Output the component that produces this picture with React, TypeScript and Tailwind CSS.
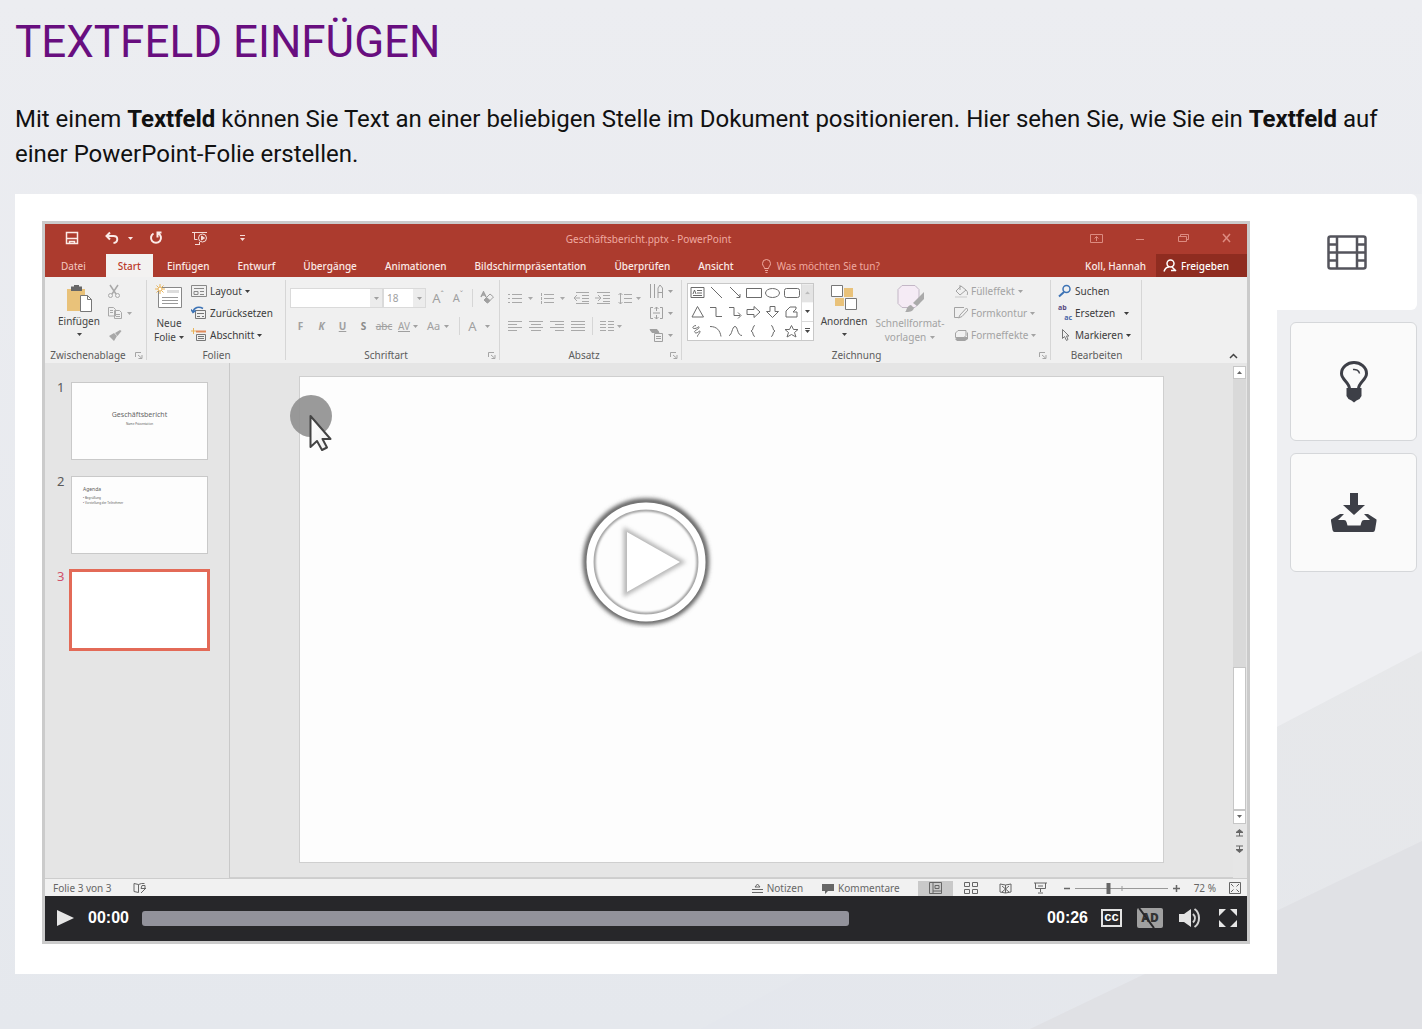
import type { ReactNode } from "react";

type Kids = { children?: ReactNode };

function Icon({ w = 16, h = 16, className = "", children }: Kids & { w?: number; h?: number; className?: string }) {
  return (
    <svg
      width={w}
      height={h}
      viewBox={`0 0 ${w} ${h}`}
      fill="none"
      stroke="currentColor"
      aria-hidden="true"
      className={`shrink-0 ${className}`}
    >
      {children}
    </svg>
  );
}

function Caret() {
  return (
    <Icon w={5} h={3}>
      <path d="M0 0h5L2.5 3z" fill="currentColor" stroke="none" />
    </Icon>
  );
}

function Launcher() {
  return (
    <Icon w={8} h={7} className="absolute right-1 bottom-1 text-[#a5a5a5]">
      <path d="M.5 5V.5H6M3 3l3.500 3M7 3v3.500H3.500" />
    </Icon>
  );
}

function Group({
  label,
  className,
  launcher,
  children,
}: Kids & { label: string; className: string; launcher?: boolean }) {
  return (
    <section className={`relative flex shrink-0 flex-col ${className}`}>
      <div className="flex h-[69px]">{children}</div>
      <h3 className="text-center leading-4 whitespace-nowrap text-[#5c5c5c]">{label}</h3>
      {launcher && <Launcher />}
      <span className="absolute top-0 right-0 h-[80px] w-px bg-[#d6d6d6]" />
    </section>
  );
}

function Tool({ label, className = "", children }: Kids & { label: string; className?: string }) {
  return (
    <button type="button" aria-label={label} className={`flex items-center justify-center ${className}`}>
      {children}
    </button>
  );
}

function Row({
  label,
  icon,
  caret,
  className = "text-[#3c3c3c]",
}: {
  label: string;
  icon: ReactNode;
  caret?: boolean;
  className?: string;
}) {
  return (
    <button type="button" className={`flex h-[22px] items-center gap-[3px] whitespace-nowrap ${className}`}>
      {icon}
      {label}
      {caret && <Caret />}
    </button>
  );
}

function Backdrop() {
  return (
    <svg className="absolute inset-0 h-full w-full" viewBox="0 0 1422 1029" preserveAspectRatio="none" aria-hidden="true">
      <defs>
        <linearGradient id="base" x1="0" y1="0" x2="0" y2="1">
          <stop offset="0" stopColor="#ecedf1" />
          <stop offset="1" stopColor="#e5e8ed" />
        </linearGradient>
        <linearGradient id="band" x1="0" y1="1" x2="1" y2="0">
          <stop offset="0" stopColor="#e4e7ed" />
          <stop offset="1" stopColor="#e7e8ea" />
        </linearGradient>
      </defs>
      <path d="M0 0h1422v1029H0z" fill="url(#base)" />
      <path d="M1277 194h145v470l-145 75z" fill="#eeeff2" />
      <path d="M1422 651 700 1029h722z" fill="url(#band)" />
      <path d="M1422 841 1030 1029h392z" fill="#e0e1e5" />
    </svg>
  );
}

function TitleBar() {
  return (
    <div className="flex h-[30px] items-center pb-[2px] text-[#f6dcd8]">
      <div className="flex flex-1 items-center pl-[20px]">
        <Tool label="Speichern">
          <Icon w={14} h={14} className="text-[#fbeae7]">
            <path d="M1.500 1.500h11v11h-11zM1.500 7.500h11M4.500 12.500v-2h5v2" strokeWidth="1.500" />
          </Icon>
        </Tool>
        <Tool label="Rückgängig" className="ml-[26px] gap-2 text-[#fbeae7]">
          <Icon w={15} h={14}>
            <path d="M5 1.500 1.500 5 5 8.500M2 5h6.500c5 0 5 6.500 0 7" strokeWidth="2" />
          </Icon>
          <Caret />
        </Tool>
        <Tool label="Wiederholen" className="ml-[16px] text-[#fbeae7]">
          <Icon w={14} h={14}>
            <path d="M4.500 2.500a5 5 0 1 0 5 0M8.500 6.500v-5h4" strokeWidth="2" />
          </Icon>
        </Tool>
        <Tool label="Präsentation starten" className="ml-[28px]">
          <Icon w={18} h={15}>
            <path d="M1 1.500h15M3.500 2v6.500h3M4 13.500h5M8.500 11v3" />
            <circle cx="11.500" cy="7" r="4" />
            <path d="M10.500 5v4l3-2z" fill="currentColor" />
          </Icon>
        </Tool>
        <Tool label="Symbolleiste anpassen" className="ml-[30px]">
          <Icon w={7} h={7}>
            <path d="M1 .500h5" />
            <path d="M1 3h5L3.500 6z" fill="currentColor" stroke="none" />
          </Icon>
        </Tool>
      </div>
      <span className="pt-[2px] text-[#f0aaa0]">Geschäftsbericht.pptx - PowerPoint</span>
      <div className="flex flex-1 items-center justify-end gap-[32px] pr-[15px] text-[#dd8b80]">
        <Tool label="Menüband-Optionen">
          <Icon w={13} h={10}>
            <path d="M.500 1.500h12v8H.500zM6.500 8V3.500M4.500 5.500l2-2 2 2" />
          </Icon>
        </Tool>
        <Tool label="Minimieren">
          <Icon w={11} h={10}>
            <path d="M1 6.500h8" />
          </Icon>
        </Tool>
        <Tool label="Verkleinern">
          <Icon w={11} h={10}>
            <path d="M.500 3.500h8v5h-8zM2.500 3V1.500h8v5h-2" />
          </Icon>
        </Tool>
        <Tool label="Schließen">
          <Icon w={11} h={10}>
            <path d="m2 1 7 8M9 1 2 9" strokeWidth="1.500" />
          </Icon>
        </Tool>
      </div>
    </div>
  );
}

const tabs = ["Datei", "Start", "Einfügen", "Entwurf", "Übergänge", "Animationen", "Bildschirmpräsentation", "Überprüfen", "Ansicht"];

function TabBar() {
  return (
    <div className="flex h-[23px] items-stretch whitespace-nowrap text-[#fbeae7]">
      {tabs.map((tab) => (
        <button
          key={tab}
          type="button"
          className={
            tab === "Start"
              ? "bg-[#f3f2f1] px-[12px] font-medium text-[#bb3a2b]"
              : tab === "Datei"
                ? "pr-[20px] pl-[16px] text-[#f3c9c3]"
                : "px-[14px] font-medium"
          }
        >
          {tab}
        </button>
      ))}
      <button type="button" className="ml-[13px] flex items-center gap-[5px] text-[#f0aaa0]">
        <Icon w={11} h={14}>
          <path d="M3.500 9.500C3.500 7.500 1.500 7 1.500 4.500a4 4 0 0 1 8 0c0 2.500-2 3-2 5zM4 11.500h3M4.500 13.500h2" />
        </Icon>
        Was möchten Sie tun?
      </button>
      <button type="button" className="ml-auto px-[10px] font-medium">
        Koll, Hannah
      </button>
      <button type="button" className="flex w-[91px] items-center gap-[4px] bg-[#8f2c20] pl-[7px] font-medium text-white">
        <Icon w={14} h={14}>
          <circle cx="7.500" cy="4.500" r="3.500" strokeWidth="1.500" />
          <path d="M1 12.500c1-3 3-4.500 5-4.500M9 8l4 4M8 11.500h5" strokeWidth="1.500" />
        </Icon>
        Freigeben
      </button>
    </div>
  );
}

function LinesIcon({ lines }: { lines: string }) {
  return (
    <Icon w={14} h={11} className="text-[#a9a9a9]">
      <path d={lines} />
    </Icon>
  );
}

const shapes = [
  "M2 1.500h13v10H2zM8 4.500h5M8 7h5M4 9.500h9M4 8l1.500-4L7 8",
  "m3 1 11 11",
  "m3 1 10 10M13 8v3.500H9.500",
  "M1.500 2.500h15v9h-15z",
  "M1.500 7a7 4.500 0 1 0 14 0 7 4.500 0 1 0-14 0z",
  "M3.500 2.500h11q2 0 2 2v5q0 2-2 2h-11q-2 0-2-2v-5q0-2 2-2z",
  "m8.500 1.500 6 10.500H3z",
  "M2 2.500h6v9h6",
  "M2 2.500h5v8h6M11 7.500l3 3-3 3",
  "M2 4.500h7V1.500L15 7l-6 5.500v-3H2z",
  "M6 1.500h5v5h3.500L8.500 12.500 2.500 6.500H6z",
  "M3 12V6l4-4h6v2l-3 3h4v5z",
  "M7 1.500C3 2 3 5 6 4.500s4-3 4-1-6 3-4 5 5-3 5-1-4 5-2 5",
  "M2 2.500c7 0 10 4 11 10",
  "M2 11.500c3 0 3-9 6-9s2 9 7 9",
  "M10 1.500c-3 0-1 5-4 5.500 3 .5 1 5.500 4 5.500",
  "M7 1.500c3 0 1 5 4 5.500-3 .5-1 5.500-4 5.500",
  "m8.500 1.500 2 4h4.500L11.500 8.500l1.500 4.500-4.500-2.500L4 13l1.500-4.500L2 5.500h4.500z",
];

function Ribbon() {
  return (
    <div className="relative flex h-[86px] overflow-hidden bg-[#f0f0f0] pt-[3px] text-[#444]">
      <Group label="Zwischenablage" className="w-[102px] [&_h3]:pr-[16px]" launcher>
        <button type="button" className="flex w-[62px] flex-col items-center pt-1 pl-[6px]">
          <Icon w={28} h={29}>
            <path d="M2 5h18v22H2z" fill="#e9c27a" stroke="none" />
            <path d="M6 2.500h3V1h5v1.500h3V7H6z" fill="#666" stroke="none" />
            <path d="M15.500 11.500h7l4 4v12h-11z" fill="#fff" stroke="#777" />
            <path d="M22.500 11.500v4h4" stroke="#777" />
          </Icon>
          <span className="mb-[4px] leading-4">Einfügen</span>
          <Caret />
        </button>
        <div className="flex flex-col text-[#a8a8a8]">
          <Tool label="Ausschneiden" className="h-[22px] w-[14px]">
            <Icon w={14} h={15}>
              <path d="m3 1 6 9M11 1 5 10" strokeWidth="1.500" />
              <circle cx="3.500" cy="11.500" r="2" />
              <circle cx="10.500" cy="11.500" r="2" />
            </Icon>
          </Tool>
          <Tool label="Kopieren" className="h-[22px] justify-start! gap-1">
            <Icon w={16} h={14}>
              <path d="M1.500 1.500h5l2 2V10h-7zM7.500 4.500h5l2 2v6h-7zM3 4.500h3M3 6.500h3M9 8.500h4M9 10.500h4" />
            </Icon>
            <Caret />
          </Tool>
          <Tool label="Format übertragen" className="h-[22px] w-[16px]">
            <Icon w={14} h={13}>
              <path d="m1 7 5 5 3-5-3-3zM7 4l2.500 3 4-5L12 1z" fill="currentColor" stroke="none" />
            </Icon>
          </Tool>
        </div>
      </Group>

      <Group label="Folien" className="w-[139px]">
        <button type="button" className="flex w-[44px] flex-col items-center pt-[4px]">
          <Icon w={28} h={25} className="mb-[7px]">
            <path d="M3.500 3.500h23v20h-23z" fill="#fff" stroke="#888" />
            <path d="M12 6h12v3H12z" fill="#ddd" stroke="none" />
            <path d="M7 13.500h16M7 16.500h16M7 19.500h16" stroke="#999" />
            <path d="M5 0v10M0 5h10M1.500 1.500l7 7M8.500 1.500l-7 7" stroke="#e9b45a" />
            <circle cx="5" cy="5" r="2" fill="#fff" stroke="#e9b45a" />
          </Icon>
          <span className="leading-[14px]">Neue</span>
          <span className="flex items-center gap-[3px] leading-[14px]">
            Folie <Caret />
          </span>
        </button>
        <div>
          <Row
            label="Layout"
            caret
            icon={
              <Icon w={16} h={14}>
                <path d="M.500 1.500h15v11H.500zM3 4.500h10M3 7.500h4v3H3zM9 7.500h4M9 10.500h4" stroke="#888" />
              </Icon>
            }
          />
          <Row
            label="Zurücksetzen"
            icon={
              <Icon w={16} h={14}>
                <path d="M4.500 4.500h10v8h-10zM6 7.500h7M6 10.500h3M11 10.500h2" stroke="#777" />
                <path d="M12 2.500C8 0 3 1 2 6M0 3.500 2 6.500l3-2" stroke="#3d73b5" strokeWidth="1.500" />
              </Icon>
            }
          />
          <Row
            label="Abschnitt"
            caret
            icon={
              <Icon w={16} h={14}>
                <path d="M5.500 6.500h9v6h-9zM7 8.500h6M7 10.500h6" stroke="#777" />
                <path d="M5 3.500h10" stroke="#e08a5a" strokeWidth="2" />
                <path d="M2.500 0v6M0 3h5" stroke="#e9b45a" />
              </Icon>
            }
          />
        </div>
      </Group>

      <Group label="Schriftart" className="w-[214px] [&_h3]:pr-[14px]" launcher>
        <div className="flex w-full flex-col pl-[4px] text-[#a0a0a0]">
          <div className="mt-[8px] flex h-[20px] items-center">
            <label className="flex h-full w-[93px] items-center border border-[#dadada] bg-white">
              <input aria-label="Schriftart" className="h-full min-w-0 flex-1 outline-none" />
              <span className="flex h-full w-[12px] items-center justify-center bg-[#ececec]">
                <Caret />
              </span>
            </label>
            <label className="flex h-full w-[43px] items-center border border-[#dadada] bg-white">
              <input aria-label="Schriftgrad" defaultValue="18" className="h-full min-w-0 flex-1 pl-[3px] outline-none" />
              <span className="flex h-full w-[12px] items-center justify-center bg-[#ececec]">
                <Caret />
              </span>
            </label>
            <Tool label="Schrift vergrößern" className="w-[22px] pl-[2px] text-[13px]">
              A<span className="self-start text-[8px] leading-[10px]">ˆ</span>
            </Tool>
            <Tool label="Schrift verkleinern" className="w-[20px] text-[11px]">
              A<span className="self-start text-[8px] leading-[10px]">ˇ</span>
            </Tool>
            <span className="mx-[4px] h-[18px] w-px bg-[#d6d6d6]" />
            <Tool label="Formatierung löschen" className="w-[20px]">
              <Icon w={14} h={14}>
                <path d="m1 6 2.500-5L6 6M2 4h3" strokeWidth="1.500" />
                <path d="m4 9 6-6 3.500 3-6 6z" />
                <path d="m4 9 2.500-2.500 3.500 3L7.500 12z" fill="currentColor" />
              </Icon>
            </Tool>
          </div>
          <div className="mt-[8px] flex h-[20px] items-center">
            <Tool label="Fett" className="w-[21px] font-bold">
              F
            </Tool>
            <Tool label="Kursiv" className="w-[21px] font-bold italic">
              K
            </Tool>
            <Tool label="Unterstrichen" className="w-[21px] font-bold underline">
              U
            </Tool>
            <Tool label="Textschatten" className="w-[21px] font-bold text-[#8a8a8a]">
              S
            </Tool>
            <Tool label="Durchgestrichen" className="w-[20px] line-through">
              abc
            </Tool>
            <Tool label="Zeichenabstand" className="w-[28px] gap-[3px]">
              <span className="underline">AV</span>
              <Caret />
            </Tool>
            <Tool label="Groß-/Kleinschreibung" className="w-[32px] gap-[4px] text-[11px]">
              Aa
              <Caret />
            </Tool>
            <span className="ml-[5px] h-[18px] w-px bg-[#d6d6d6]" />
            <Tool label="Schriftfarbe" className="w-[38px] gap-[8px] text-[13px]">
              A
              <Caret />
            </Tool>
          </div>
        </div>
      </Group>

      <Group label="Absatz" className="w-[182px] [&_h3]:pr-[14px]" launcher>
        <div className="flex w-[146px] flex-col pl-[8px] text-[#a9a9a9]">
          <div className="mt-[8px] flex h-[20px] items-center">
            <Tool label="Aufzählungszeichen" className="w-[32px] justify-start! gap-[6px]">
              <LinesIcon lines="M0 1.500h2M4 1.500h10M0 5.500h2M4 5.500h10M0 9.500h2M4 9.500h10" />
              <Caret />
            </Tool>
            <Tool label="Nummerierung" className="w-[33px] justify-start! gap-[6px]">
              <LinesIcon lines="M1.500 0v3M4 1.500h10M1.500 4v3M4 5.500h10M1.500 8v3M4 9.500h10" />
              <Caret />
            </Tool>
            <Tool label="Einzug verkleinern" className="w-[21px] justify-start!">
              <Icon w={16} h={12}>
                <path d="M3 .500h13M9 3.500h7M9 6.500h7M9 9.500h7M3 11.500h13M1 6h6M4 3 1 6l3 3" />
              </Icon>
            </Tool>
            <Tool label="Einzug vergrößern" className="w-[24px] justify-start!">
              <Icon w={16} h={12}>
                <path d="M3 .500h13M9 3.500h7M9 6.500h7M9 9.500h7M3 11.500h13M1 6h6M4 3l3 3-3 3" />
              </Icon>
            </Tool>
            <Tool label="Zeilenabstand" className="justify-start! gap-[4px]">
              <Icon w={14} h={13}>
                <path d="M2.500 1v11M.500 3l2-2 2 2M.500 10l2 2 2-2M6 2.500h8M6 6.500h8M6 10.500h8" />
              </Icon>
              <Caret />
            </Tool>
          </div>
          <div className="mt-[8px] flex h-[20px] items-center gap-[7px]">
            <Tool label="Linksbündig">
              <LinesIcon lines="M0 .500h14M0 3.500h9M0 6.500h14M0 9.500h9" />
            </Tool>
            <Tool label="Zentriert">
              <LinesIcon lines="M0 .500h14M2 3.500h10M0 6.500h14M2 9.500h10" />
            </Tool>
            <Tool label="Rechtsbündig">
              <LinesIcon lines="M0 .500h14M5 3.500h9M0 6.500h14M5 9.500h9" />
            </Tool>
            <Tool label="Blocksatz">
              <LinesIcon lines="M0 .500h14M0 3.500h14M0 6.500h14M0 9.500h14" />
            </Tool>
            <span className="h-[18px] w-px bg-[#d6d6d6]" />
            <Tool label="Spalten" className="gap-[3px]">
              <LinesIcon lines="M0 .500h6M8 .500h6M0 3.500h6M8 3.500h6M0 6.500h6M8 6.500h6M0 9.500h6M8 9.500h6" />
              <Caret />
            </Tool>
          </div>
        </div>
        <div className="flex flex-col pl-[3px] text-[#a0a0a0]">
          <Tool label="Textrichtung" className="h-[22px] gap-1">
            <Icon w={15} h={15}>
              <path d="M1.500 0v14M5.500 0v14M9 14V4l2-3 2.500 3v10M9 8.500h4" />
            </Icon>
            <Caret />
          </Tool>
          <Tool label="Text ausrichten" className="h-[22px] gap-1">
            <Icon w={15} h={14}>
              <path d="M4 1.500H1.500v11H4M11 1.500h2.500v11H11M7.500 1v4M5.500 3l2-2 2 2M7.500 9v4M5.500 11l2 2 2-2M4 7h7" />
            </Icon>
            <Caret />
          </Tool>
          <Tool label="In SmartArt konvertieren" className="h-[22px] gap-1">
            <Icon w={15} h={15}>
              <path d="M1 1.500h7l2 3H3z" fill="currentColor" />
              <path d="M5.500 5.500h8v8h-8zM7 8.500h5M7 10.500h5" />
            </Icon>
            <Caret />
          </Tool>
        </div>
      </Group>

      <Group label="Zeichnung" className="w-[369px] [&_h3]:pr-[20px]" launcher>
        <div className="mt-[3px] ml-[5px] flex h-[58px] w-[127px] border border-[#c8c8c8] bg-white">
          <div className="grid flex-1 grid-cols-6 grid-rows-3 text-[#6b6b6b]">
            {shapes.map((d, i) => (
              <Tool key={d} label={`Form ${i + 1}`}>
                <Icon w={17} h={14}>
                  <path d={d} />
                </Icon>
              </Tool>
            ))}
          </div>
          <div className="flex w-[12px] flex-col border-l border-[#dadada]">
            <Tool label="Nach oben" className="flex-1 rotate-180 bg-[#e4e4e4] text-[#bbb]">
              <Caret />
            </Tool>
            <Tool label="Nach unten" className="flex-1">
              <Caret />
            </Tool>
            <Tool label="Weitere Formen" className="flex-1 flex-col gap-px border-t border-[#dadada]">
              <span className="h-px w-[5px] bg-[#555]" />
              <Caret />
            </Tool>
          </div>
        </div>
        <button type="button" className="flex w-[60px] flex-col items-center pt-[4px]">
          <Icon w={28} h={27} className="mb-[2px]">
            <path d="M5 4h18v18H5z" fill="#e9c27a" stroke="none" />
            <path d="M0 0h14v14H0zM14 13h14v14H14z" fill="#f0f0f0" stroke="none" />
            <path d="M1.500 1.500h11v11h-11zM15.500 14.500h11v11h-11z" fill="#fff" stroke="#777" />
          </Icon>
          <span className="mb-[4px] leading-4">Anordnen</span>
          <Caret />
        </button>
        <button type="button" className="flex w-[72px] flex-col items-center pt-[4px] text-[#a3a3a3]">
          <Icon w={30} h={29} className="mb-[3px]">
            <path d="M7 1.500h13l4 4v14l-4 4H7l-4-4v-14z" fill="#f5ebf5" stroke="#c3b7c6" />
            <path d="M29 8v7l-7 7-4-3z" fill="#aaa" stroke="none" />
            <path d="M10 28c2-1 1-6 6-7l3 3c-1 4-5 4-9 4z" fill="#aaa" stroke="none" />
          </Icon>
          <span className="leading-[14px]">Schnellformat-</span>
          <span className="flex items-center gap-[4px] leading-[14px]">
            vorlagen <Caret />
          </span>
        </button>
        <div className="pl-[8px]">
          <Row
            label="Fülleffekt"
            caret
            className="text-[#a3a3a3]"
            icon={
              <Icon w={14} h={14}>
                <path d="m2 7 5-5 5 4-6 5zM6 1v5M12 6c2 2 2 4 1 5" />
                <path d="M1 13h12" strokeWidth="2" stroke="#ddd" />
              </Icon>
            }
          />
          <Row
            label="Formkontur"
            caret
            className="text-[#a3a3a3]"
            icon={
              <Icon w={14} h={14}>
                <path d="M10 1.500H.500v10h4M12.500 2 6 9l-1.500 3L8 10.500 14 4z" />
              </Icon>
            }
          />
          <Row
            label="Formeffekte"
            caret
            className="text-[#a3a3a3]"
            icon={
              <Icon w={14} h={14}>
                <path d="M4 9h9V4l1 1v6l-3 2H3L1 11z" fill="currentColor" stroke="none" />
                <path d="M4 2.500h8v5l-2 2H1.500V5z" fill="#f0f0f0" />
              </Icon>
            }
          />
        </div>
      </Group>

      <Group label="Bearbeiten" className="w-[91px]">
        <div className="pl-[7px]">
          <Row
            label="Suchen"
            icon={
              <Icon w={14} h={14}>
                <circle cx="8.500" cy="5" r="3.500" stroke="#3d73b5" strokeWidth="1.500" />
                <path d="M6 8l-5 4.500" stroke="#3d73b5" strokeWidth="2" />
              </Icon>
            }
          />
          <button type="button" className="flex h-[22px] items-center gap-[3px] text-[#3c3c3c]">
            <span className="w-[14px] font-['Open_Sans',sans-serif] text-[7px] leading-[10px] font-bold" aria-hidden="true">
              <span className="block text-left text-[#5a4a80]">ab</span>
              <span className="block text-right text-[#4a67a8]">ac</span>
            </span>
            Ersetzen
            <span className="ml-[6px]">
              <Caret />
            </span>
          </button>
          <Row
            label="Markieren"
            caret
            icon={
              <Icon w={14} h={14}>
                <path d="M4.500 1.500v9l2-2 2 4 1.500-1-1.500-3.500H11z" stroke="#777" />
              </Icon>
            }
          />
        </div>
      </Group>

      <Tool label="Menüband reduzieren" className="mr-[9px] mb-[4px] ml-auto self-end">
        <Icon w={9} h={6}>
          <path d="m1 5 3.500-3.500L8 5" strokeWidth="1.500" />
        </Icon>
      </Tool>
    </div>
  );
}

function Thumbnails() {
  return (
    <ol className="w-[185px] shrink-0 border-r border-[#c9c9c9] pt-[19px] text-[13px] leading-[10px] text-[#5a5a5a]">
      <li className="flex pl-[12px]">
        <span className="w-[14px]">1</span>
        <div className="flex h-[78px] w-[137px] flex-col items-center justify-center border border-[#c9c9c9] bg-[#fdfdfd] pb-1">
          <span className="text-[7px] leading-[10px] text-[#666]">Geschäftsbericht</span>
          <span className="text-[3px] leading-[8px]">Name Präsentation</span>
        </div>
      </li>
      <li className="mt-[16px] flex pl-[12px]">
        <span className="w-[14px]">2</span>
        <div className="h-[78px] w-[137px] border border-[#c9c9c9] bg-[#fdfdfd] pt-[8px] pl-[11px]">
          <p className="text-[5px] leading-[8px]">Agenda</p>
          <ul className="pt-[3px] text-[3px] leading-[5px]">
            <li>• Begrüßung</li>
            <li>• Vorstellung der Teilnehmer</li>
          </ul>
        </div>
      </li>
      <li className="mt-[15px] flex pl-[12px]">
        <span className="w-[12px] pt-[2px] text-[#d0506a]">3</span>
        <div className="h-[82px] w-[141px] border-3 border-[#e36a57] bg-white" />
      </li>
    </ol>
  );
}

function ScrollBar() {
  return (
    <div className="flex w-[14px] flex-col bg-[#e6e6e6] pt-[3px] pb-[25px] text-[#666]">
      <Tool label="Nach oben blättern" className="h-[13px] w-[13px] rotate-180 border border-[#c6c6c6] bg-white">
        <Caret />
      </Tool>
      <div className="flex w-[13px] flex-1 flex-col bg-[#d9d9d9]">
        <div className="mt-auto h-[143px] border border-[#c6c6c6] bg-white" />
      </div>
      <Tool label="Nach unten blättern" className="h-[14px] w-[13px] border border-[#c6c6c6] bg-white">
        <Caret />
      </Tool>
      <Tool label="Vorherige Folie" className="mt-[5px] w-[13px]">
        <Icon w={7} h={8}>
          <path d="m0 3.500 3.500-3 3.500 3zM0 7h7M3.500 3v4" fill="currentColor" />
        </Icon>
      </Tool>
      <Tool label="Nächste Folie" className="mt-[8px] w-[13px]">
        <Icon w={7} h={8}>
          <path d="m0 4.500 3.500 3 3.500-3zM0 1h7M3.500 1v4" fill="currentColor" />
        </Icon>
      </Tool>
    </div>
  );
}

function Editor() {
  return (
    <div className="flex bg-[#e5e5e5]">
      <Thumbnails />
      <div className="min-w-0 flex-1 border-b border-[#cfcfcf] px-[69px] pt-[13px] pb-[14px]">
        <div className="relative aspect-video w-full border border-[#cfcfcf] bg-[#fdfdfd]">
          <svg className="absolute top-[18px] -left-[12px]" width="46" height="60" viewBox="0 0 46 60" aria-hidden="true">
            <defs>
              <linearGradient id="pointer" x1="0" y1="0" x2="1" y2="1">
                <stop offset="0" stopColor="#fff" />
                <stop offset="1" stopColor="#f1f1f1" />
              </linearGradient>
            </defs>
            <circle cx="23" cy="21" r="21" fill="#8f8f8f" opacity=".9" />
            <path
              d="M22.500 21v31l6.500-6 5 9 5-2.500-4.500-8.500h8z"
              fill="url(#pointer)"
              stroke="#444"
              strokeWidth="2"
              strokeLinejoin="round"
            />
          </svg>
        </div>
      </div>
      <ScrollBar />
    </div>
  );
}

function StatusBar() {
  return (
    <div className="flex h-[18px] items-center border-t border-[#cdcdcd] bg-[#f1f1f1] pt-[2px] pl-[8px] whitespace-nowrap text-[#666]">
      <span>Folie 3 von 3</span>
      <Icon w={14} h={12} className="ml-[21px]">
        <path d="M5.500 10.500 1 9.500v-8l4.500 1 3-1h3M5.500 2.500v8M8 6.500h4v-3H9zM8 11l5-5" />
      </Icon>
      <button type="button" className="ml-auto flex items-center gap-1">
        <Icon w={11} h={11}>
          <path d="M0 6.500h11M0 9.500h11M3 4h5L5.500 1z" />
        </Icon>
        Notizen
      </button>
      <button type="button" className="ml-[19px] flex items-center gap-1">
        <Icon w={12} h={11}>
          <path d="M0 1h12v7H6L3 11V8H0z" fill="currentColor" stroke="none" />
        </Icon>
        Kommentare
      </button>
      <Tool label="Normalansicht" className="ml-[18px] h-full w-[35px] bg-[#c9c9c9]">
        <Icon w={13} h={12}>
          <path d="M.500.500h12v11H.500zM4 .500v11M6 3.500h4v3H6zM4 9h8" />
        </Icon>
      </Tool>
      <Tool label="Foliensortierung" className="w-[36px]">
        <Icon w={14} h={13}>
          <path d="M.500.500h5v4h-5zM8.500.500h5v4h-5zM.500 7.500h5v4h-5zM8.500 7.500h5v4h-5z" />
        </Icon>
      </Tool>
      <Tool label="Leseansicht" className="w-[34px]">
        <Icon w={13} h={11}>
          <path d="M6.500 2v8L1 9V1zM6.500 2v8L12 9V1zM3 3l7 6M10 3 3 9" />
        </Icon>
      </Tool>
      <Tool label="Bildschirmpräsentation" className="w-[36px]">
        <Icon w={13} h={12}>
          <path d="M0 1h13M1.500 1v5.500h10V1M6.500 7v3M4 11h5M4 4h5" />
        </Icon>
      </Tool>
      <div className="ml-[5px] flex items-center gap-[5px]">
        <Tool label="Verkleinern">
          <Icon w={6} h={7}>
            <path d="M0 3.500h6" strokeWidth="1.500" />
          </Icon>
        </Tool>
        <Icon w={93} h={11}>
          <path d="M0 5.500h93M47 3v5" stroke="#999" />
          <path d="M33.500 0v11" strokeWidth="4" />
        </Icon>
        <Tool label="Vergrößern">
          <Icon w={7} h={7}>
            <path d="M0 3.500h7M3.500 0v7" strokeWidth="1.500" />
          </Icon>
        </Tool>
      </div>
      <span className="ml-[14px]">72 %</span>
      <Tool label="An Fenster anpassen" className="mr-[6px] ml-[13px]">
        <Icon w={12} h={12}>
          <path d="M.500.500h11v11H.500zM2 2l2.500 2.500M10 2 7.500 4.500M2 10l2.500-2.500M10 10 7.500 7.500" />
        </Icon>
      </Tool>
    </div>
  );
}

function Controls() {
  return (
    <div className="flex h-[45px] items-center bg-[#27272a] pl-[12px] font-['Liberation_Sans',sans-serif] text-[16px] font-bold text-white">
      <Tool label="Abspielen">
        <Icon w={17} h={18}>
          <path d="M0 1v16l17-8z" fill="#e6e6e6" stroke="none" />
        </Icon>
      </Tool>
      <span className="ml-[14px] w-[42px]">00:00</span>
      <input
        type="range"
        aria-label="Position"
        defaultValue="0"
        className="mr-[198px] ml-[12px] h-[15px] min-w-0 flex-1 appearance-none rounded-[3px] bg-[#92929b] [&::-webkit-slider-thumb]:h-0 [&::-webkit-slider-thumb]:w-0 [&::-webkit-slider-thumb]:appearance-none"
      />
      <span className="mr-[13px]">00:26</span>
      <Tool
        label="Untertitel"
        className="h-[18px] w-[21px] border-2 border-[#e3e3e3] pb-[2px] text-[13px] leading-[12px]"
      >
        cc
      </Tool>
      <Tool
        label="Audiodeskription"
        className="relative ml-[15px] h-[20px] w-[26px] rounded-[2px] bg-[#a0a0a0] font-['Open_Sans',sans-serif] text-[12px] font-extrabold text-[#333]"
      >
        AD
        <svg className="absolute inset-0" width="26" height="20" viewBox="0 0 26 20" aria-hidden="true">
          <path d="m2 0 15 20" stroke="#27272a" strokeWidth="2" />
        </svg>
      </Tool>
      <Tool label="Lautstärke" className="ml-[16px]">
        <Icon w={22} h={22} className="text-[#d2d2d2]">
          <path d="M0 7h5l7-5v18l-7-5H0z" fill="#e3e3e3" stroke="none" />
          <path d="M14 7c2.500 2.500 2.500 6 0 8.500M15.500 2c6 4 6 14 0 18" strokeWidth="2" />
        </Icon>
      </Tool>
      <Tool label="Vollbild" className="mr-[10px] ml-[18px]">
        <Icon w={18} h={18}>
          <path d="M0 0h7L0 7zM18 0v7l-7-7zM0 18v-7l7 7zM18 18h-7l7-7z" fill="#e6e6e6" stroke="none" />
        </Icon>
      </Tool>
    </div>
  );
}

function PlayOverlay() {
  return (
    <div className="pointer-events-none absolute inset-0 flex items-center justify-center">
      <button type="button" aria-label="Video abspielen" className="pointer-events-auto">
        <svg width="136" height="136" viewBox="0 0 136 136" fill="none" aria-hidden="true">
          <defs>
            <filter id="soft" x="-20%" y="-20%" width="140%" height="140%">
              <feGaussianBlur stdDeviation="2" />
            </filter>
            <filter id="fine" x="-20%" y="-20%" width="140%" height="140%">
              <feGaussianBlur stdDeviation="1" />
            </filter>
          </defs>
          <circle cx="68" cy="69.500" r="60" stroke="#5a5a5a" strokeWidth="6" filter="url(#soft)" />
          <circle cx="68" cy="70" r="52" stroke="#999" strokeWidth="3" filter="url(#fine)" />
          <circle cx="68" cy="70" r="56" stroke="#fff" strokeWidth="7" />
          <path d="M48 39v62l55-31z" fill="#999" stroke="#999" strokeWidth="5" opacity=".7" filter="url(#soft)" />
          <path d="M49 40v60l53-30z" fill="#fff" />
        </svg>
      </button>
    </div>
  );
}

function SideTabs() {
  const box =
    "ml-[13px] flex h-[119px] items-center justify-center rounded-md border border-[#d5d7da] bg-[#fafafa] text-[#3d3f47]";
  return (
    <nav className="flex w-[140px] shrink-0 flex-col gap-[12px]">
      <button type="button" aria-label="Video" className="flex h-[116px] items-center justify-center rounded-r-md bg-white text-[#54545c]">
        <Icon w={40} h={35}>
          <rect x="1.500" y="1.500" width="37" height="32" rx="2" strokeWidth="2.500" />
          <path d="M10 1v33M30 1v33M10 17.500h20" strokeWidth="2.500" />
          <path d="M1 9.500h9M1 17.500h9M1 25.500h9M30 9.500h9M30 17.500h9M30 25.500h9" strokeWidth="2.500" />
        </Icon>
      </button>
      <button type="button" aria-label="Tipps" className={box}>
        <Icon w={28} h={42}>
          <path d="M9.500 28C9.500 21 1.500 19 1.500 12.500 1.500 6 7.500 1.500 14 1.500S26.500 6 26.500 12.500C26.500 19 18.500 21 18.500 28" strokeWidth="3" />
          <path d="M6.500 27h15v8l-2 3-3 1.500-2.500 2-2.500-2-3-1.500-2-3z" fill="currentColor" stroke="none" />
          <path d="M13 8.500c3-.5 6 1 6.500 4" strokeWidth="1.500" />
        </Icon>
      </button>
      <button type="button" aria-label="Herunterladen" className={box}>
        <Icon w={46} h={39}>
          <path d="M19 0h8v12h7L23 22 12 12h7z" fill="currentColor" stroke="none" />
          <path
            d="M9 21h4l-6 6h6q2 0 2.500 2l1 3.500h13l1-3.500q.500-2 2.500-2h6l-6-6h4l8.500 5.500v1.500l-1.500 9q-.500 2-2 2H3.500q-1.500 0-2-2L0 28v-1.500z"
            fill="currentColor"
            stroke="none"
          />
        </Icon>
      </button>
    </nav>
  );
}

export default function App() {
  return (
    <div className="relative min-h-screen font-['Roboto',sans-serif] text-[#111]">
      <Backdrop />
      <main className="relative pr-[5px] pl-[15px]">
        <h1 className="pt-[15px] text-[44px] leading-[54px] text-[#680e7f]">TEXTFELD EINFÜGEN</h1>
        <p className="mt-[33px] text-[24px] leading-[35px]">
          Mit einem <strong>Textfeld</strong> können Sie Text an einer beliebigen Stelle im Dokument positionieren. Hier
          sehen Sie, wie Sie ein <strong>Textfeld</strong> auf einer PowerPoint-Folie erstellen.
        </p>
        <div className="mt-[22px] flex items-start">
          <section className="min-w-0 flex-1 bg-white px-[27px] pt-[27px] pb-[30px]">
            <div className="border-3 border-[#cbcbcb] font-['Noto_Sans',sans-serif] text-[10px] leading-4">
              <div className="relative">
                <div className="bg-[#ac3b2e]">
                  <TitleBar />
                  <TabBar />
                </div>
                <Ribbon />
                <Editor />
                <StatusBar />
                <PlayOverlay />
              </div>
              <Controls />
            </div>
          </section>
          <SideTabs />
        </div>
      </main>
    </div>
  );
}
